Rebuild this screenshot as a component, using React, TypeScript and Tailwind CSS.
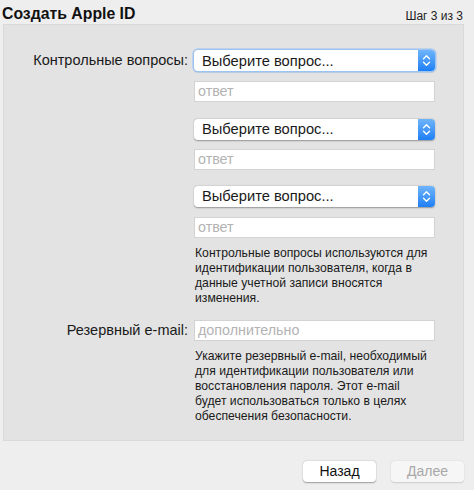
import React from "react";

const font = { fontFamily: '"Liberation Sans", Arial, sans-serif' };

function Stepper() {
  return (
    <div className="flex h-full w-[17px] items-center justify-center rounded-r-[4px] bg-gradient-to-b from-[#6db4fb] to-[#1b7ff5]">
      <svg width="9" height="13" viewBox="0 0 9 13" fill="none" stroke="white" strokeWidth="1.4" strokeLinecap="round" strokeLinejoin="round">
        <path d="M1.5 4.8 4.5 1.8 7.5 4.8" />
        <path d="M1.5 8.2 4.5 11.2 7.5 8.2" />
      </svg>
    </div>
  );
}

function Select({ focused }: { focused?: boolean }) {
  return (
    <div
      className={
        "flex h-[21px] w-[241px] items-center rounded-[4px] bg-white shadow-[0_0.5px_1.5px_rgba(0,0,0,0.35)] " +
        (focused ? "ring-[1.5px] ring-[#9cc3f2]" : "")
      }
    >
      <span className="flex-1 pl-[8px] text-[14.7px] leading-none text-[#1a1a1a]">Выберите вопрос...</span>
      <Stepper />
    </div>
  );
}

function Field({ placeholder }: { placeholder: string }) {
  return (
    <div className="flex h-[21px] w-[241px] items-center border border-[#d3d3d3] bg-white pl-[3px] text-[14.3px] leading-none text-[#b3b3b3]">
      {placeholder}
    </div>
  );
}

function Row({ label, children, className }: { label?: string; children: React.ReactNode; className?: string }) {
  return (
    <div className={"flex items-center " + (className ?? "")}>
      <div className="w-[190px] pr-[6px] text-right text-[14.5px] text-[#1a1a1a]">{label}</div>
      {children}
    </div>
  );
}

export default function App() {
  return (
    <div className="h-[490px] w-[474px] bg-[#eeeeee]" style={font}>
      <div className="flex h-[24px] items-end justify-between px-[2px] pt-[1px]">
        <h1 className="text-[15.8px] font-bold leading-[20px] text-[#111]">Создать Apple ID</h1>
        <span className="mb-[-1px] mr-[9px] text-[12px] text-[#222]">Шаг 3 из 3</span>
      </div>
      <div className="ml-[3px] h-[417px] w-[461px] border border-[#d9d9d9] bg-[#e3e3e3] pt-[25px]">
        <Row label="Контрольные вопросы:">
          <Select focused />
        </Row>
        <Row className="mt-[9px]">
          <Field placeholder="ответ" />
        </Row>
        <Row className="mt-[17px]">
          <Select />
        </Row>
        <Row className="mt-[9px]">
          <Field placeholder="ответ" />
        </Row>
        <Row className="mt-[16px]">
          <Select />
        </Row>
        <Row className="mt-[10px]">
          <Field placeholder="ответ" />
        </Row>
        <Row className="mt-[8px]">
          <p className="w-[235px] pl-[1px] text-[12.2px] leading-[15px] text-[#1a1a1a]">
            Контрольные вопросы используются для идентификации пользователя, когда в данные учетной записи вносятся изменения.
          </p>
        </Row>
        <Row label="Резервный e-mail:" className="mt-[14px]">
          <Field placeholder="дополнительно" />
        </Row>
        <Row className="mt-[7px]">
          <p className="w-[235px] pl-[1px] text-[12.2px] leading-[15px] text-[#1a1a1a]">
            Укажите резервный e-mail, необходимый для идентификации пользователя или восстановления пароля. Этот e-mail будет использоваться только в целях обеспечения безопасности.
          </p>
        </Row>
      </div>
      <div className="mt-[20px] flex justify-end gap-[15px] pr-[10px]">
        <button className="h-[21px] w-[73px] rounded-[4px] bg-white text-[14px] text-[#111] shadow-[0_0.5px_1.5px_rgba(0,0,0,0.35)]">
          Назад
        </button>
        <button className="h-[21px] w-[73px] rounded-[4px] bg-[#f6f6f6] text-[14px] text-[#a8a8a8] shadow-[0_0.5px_1.5px_rgba(0,0,0,0.15)]">
          Далее
        </button>
      </div>
    </div>
  );
}
